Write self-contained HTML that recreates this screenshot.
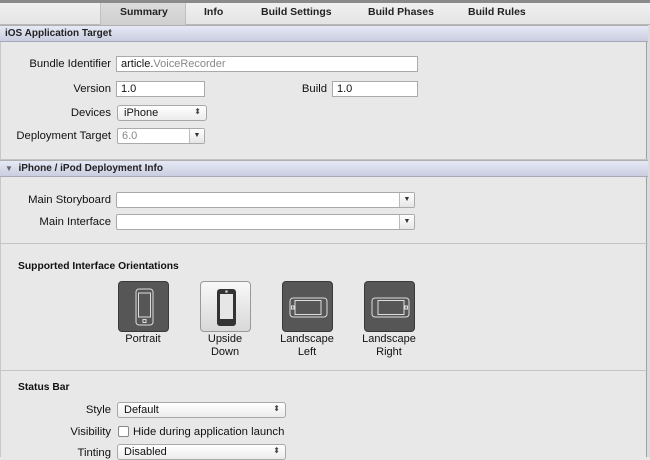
<!DOCTYPE html><html><head><style>
*{box-sizing:border-box;margin:0;padding:0}
body{width:650px;height:457px;overflow:hidden;background:#e8e8e8;font-family:"Liberation Sans",sans-serif;font-size:11px;color:#111;position:relative}
.a{position:absolute}
.tabs{left:0;top:0;width:650px;height:25px;background:linear-gradient(#f0f0f0,#e4e4e4);border-top:3px solid #8a8a8a;border-bottom:1px solid #b8b8b8}
.tab{top:6px;font-weight:bold;font-size:10.5px;color:#222}
.hdr{left:0;width:648px;height:17px;background:linear-gradient(#e6e9f5,#c9cde0);border-top:1px solid #b0b0b0;border-bottom:1px solid #a8a8b8;font-weight:bold;font-size:10px;padding:2px 0 0 5px;color:#222}
.lbl{text-align:right;font-size:11.3px;color:#111}
.in{background:#fff;border:1px solid #aaa;height:16px;font-size:11px;padding:1px 4px;color:#111}
.pop{background:linear-gradient(#fff,#ececec);border:1px solid #a8a8a8;border-radius:3px;height:16px;font-size:11px;padding:1px 6px}
.pop:after{content:"⬍";position:absolute;right:5px;top:1px;font-size:8px;color:#444}
.cb{background:#fff;border:1px solid #aaa;height:16px;border-radius:2px}
.cb i{position:absolute;right:0;top:0;width:15px;height:14px;border-left:1px solid #bbb;background:linear-gradient(#fff,#e6e6e6);font-style:normal;font-size:7px;text-align:center;line-height:14px;color:#333}
.sep{left:0;width:648px;height:1px;background:#c4c4c4}
.ic{width:51px;height:51px;border-radius:4px;background:#565656;border:1px solid #3a3a3a}
.ic.light{background:linear-gradient(#f8f8f8,#d8d8d8);border:1px solid #999}
.cap{width:80px;text-align:center;font-size:11px;line-height:13px}
</style></head><body>
<div class="a" style="left:0;top:0;width:1px;height:457px;background:#c8c8c8"></div>
<div class="a" style="left:646px;top:0;width:4px;height:457px;background:#dcdcdc;border-left:1px solid #a0a0a0"></div>
<div class="a tabs"></div>
<div class="a" style="left:100px;top:3px;width:86px;height:22px;background:linear-gradient(#dcdcdc,#cfcfcf);border-left:1px solid #c0c0c0;border-right:1px solid #c0c0c0"></div>
<div class="a tab" style="left:120px">Summary</div>
<div class="a tab" style="left:204px">Info</div>
<div class="a tab" style="left:261px">Build Settings</div>
<div class="a tab" style="left:368px">Build Phases</div>
<div class="a tab" style="left:468px">Build Rules</div>
<div class="a hdr" style="top:25px">iOS Application Target</div>

<div class="a lbl" style="left:0;width:111px;top:58px">Bundle Identifier</div>
<div class="a in" style="left:116px;top:56px;width:302px">article.<span style="color:#888">VoiceRecorder</span></div>
<div class="a lbl" style="left:0;width:111px;top:83px">Version</div>
<div class="a in" style="left:116px;top:81px;width:89px">1.0</div>
<div class="a lbl" style="left:280px;width:47px;top:83px">Build</div>
<div class="a in" style="left:332px;top:81px;width:86px">1.0</div>
<div class="a lbl" style="left:0;width:111px;top:107px">Devices</div>
<div class="a pop" style="left:117px;top:105px;width:90px">iPhone</div>
<div class="a lbl" style="left:0;width:111px;top:130px">Deployment Target</div>
<div class="a cb" style="left:117px;top:128px;width:88px;color:#888;padding:1px 4px">6.0<i>▼</i></div>

<div class="a sep" style="top:159px"></div>
<div class="a hdr" style="top:160px"><span style="color:#666;font-size:8px">▼</span>&nbsp; iPhone / iPod Deployment Info</div>
<div class="a lbl" style="left:0;width:111px;top:194px">Main Storyboard</div>
<div class="a cb" style="left:116px;top:192px;width:299px"><i>▼</i></div>
<div class="a lbl" style="left:0;width:111px;top:216px">Main Interface</div>
<div class="a cb" style="left:116px;top:214px;width:299px"><i>▼</i></div>
<div class="a sep" style="top:243px"></div>

<div class="a" style="left:18px;top:261px;font-weight:bold;font-size:10.3px">Supported Interface Orientations</div>
<div class="a ic" style="left:118px;top:281px"><svg width="51" height="51"><rect x="17" y="7" width="17" height="36" rx="3" fill="none" stroke="#ddd"/><rect x="19.5" y="11" width="12" height="24" fill="none" stroke="#ddd"/><rect x="24" y="37.5" width="3" height="3" fill="none" stroke="#ddd"/></svg></div>
<div class="a ic light" style="left:200px;top:281px"><svg width="51" height="51"><rect x="16" y="7" width="19" height="37" rx="3" fill="#333"/><rect x="19" y="12" width="13" height="25" fill="#e6e6e6"/><circle cx="25.5" cy="9.5" r="1.3" fill="#ccc"/></svg></div>
<div class="a ic" style="left:282px;top:281px"><svg width="51" height="51"><rect x="7" y="16" width="37" height="19" rx="3" fill="none" stroke="#ddd"/><rect x="12" y="18.5" width="26" height="14" fill="none" stroke="#ddd"/><rect x="8.5" y="24" width="2.5" height="3" fill="none" stroke="#ddd"/></svg></div>
<div class="a ic" style="left:364px;top:281px"><svg width="51" height="51"><rect x="7" y="16" width="37" height="19" rx="3" fill="none" stroke="#ddd"/><rect x="13" y="18.5" width="26" height="14" fill="none" stroke="#ddd"/><rect x="40" y="24" width="2.5" height="3" fill="none" stroke="#ddd"/></svg></div>
<div class="a cap" style="left:103px;top:333px">Portrait</div>
<div class="a cap" style="left:185px;top:333px">Upside<br>Down</div>
<div class="a cap" style="left:267px;top:333px">Landscape<br>Left</div>
<div class="a cap" style="left:349px;top:333px">Landscape<br>Right</div>
<div class="a sep" style="top:370px"></div>

<div class="a" style="left:18px;top:382px;font-weight:bold;font-size:10.3px">Status Bar</div>
<div class="a lbl" style="left:0;width:111px;top:404px">Style</div>
<div class="a pop" style="left:117px;top:402px;width:169px">Default</div>
<div class="a lbl" style="left:0;width:111px;top:426px">Visibility</div>
<div class="a" style="left:118px;top:426px;width:11px;height:11px;border:1px solid #888;border-radius:2px;background:#fff"></div>
<div class="a" style="left:133px;top:426px;font-size:11.3px">Hide during application launch</div>
<div class="a lbl" style="left:0;width:111px;top:447px">Tinting</div>
<div class="a pop" style="left:117px;top:444px;width:169px">Disabled</div>
</body></html>
